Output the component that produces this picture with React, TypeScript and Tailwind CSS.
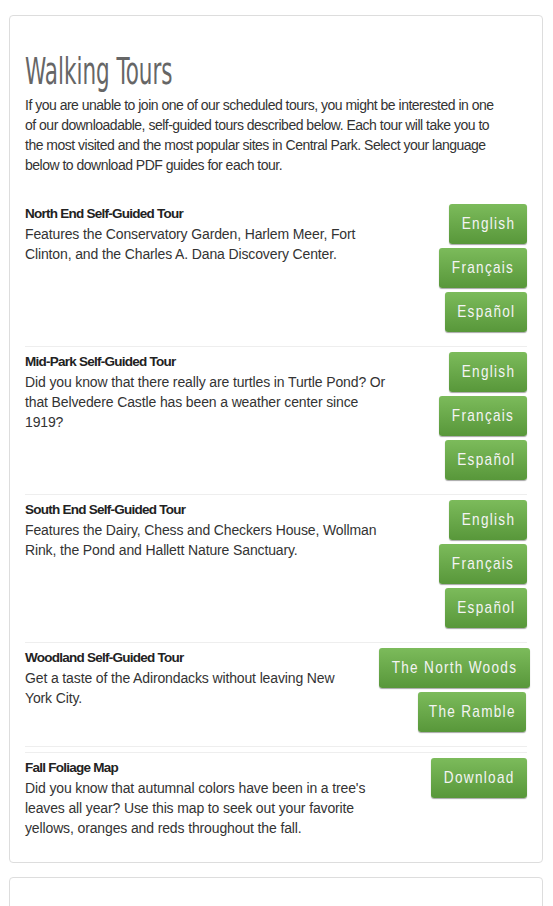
import React from "react";

const bodyFont = { fontFamily: '"Liberation Sans", Arial, sans-serif' };
const condFont = { fontFamily: '"DejaVu Sans Condensed", "DejaVu Sans", sans-serif' };

type Btn = { label: string; w: string; extra?: string };
type Row = { title: string; lines: string[]; buttons: Btn[] };

const langs: Btn[] = [
  { label: "English", w: "w-[78px]" },
  { label: "Français", w: "w-[88px]" },
  { label: "Español", w: "w-[82px]" },
];

const rows: Row[] = [
  {
    title: "North End Self-Guided Tour",
    lines: ["Features the Conservatory Garden, Harlem Meer, Fort", "Clinton, and the Charles A. Dana Discovery Center."],
    buttons: langs,
  },
  {
    title: "Mid-Park Self-Guided Tour",
    lines: [
      "Did you know that there really are turtles in Turtle Pond? Or",
      "that Belvedere Castle has been a weather center since",
      "1919?",
    ],
    buttons: langs,
  },
  {
    title: "South End Self-Guided Tour",
    lines: ["Features the Dairy, Chess and Checkers House, Wollman", "Rink, the Pond and Hallett Nature Sanctuary."],
    buttons: langs,
  },
  {
    title: "Woodland Self-Guided Tour",
    lines: ["Get a taste of the Adirondacks without leaving New", "York City."],
    buttons: [
      { label: "The North Woods", w: "w-[151px]", extra: "mr-[-3px]" },
      { label: "The Ramble", w: "w-[108px]", extra: "mr-[1px]" },
    ],
  },
];

function GreenButton({ b }: { b: Btn }) {
  return (
    <div
      className={`${b.w} ${b.extra ?? ""} h-[40px] rounded-[3px] bg-gradient-to-b from-[#7cbb5b] to-[#58973a] shadow-[0_1px_1px_rgba(0,0,0,0.35)] flex items-center justify-center text-[#f4f4f4]`}
    >
      <span
        className="inline-block whitespace-nowrap text-[17px] tracking-[1.6px] scale-x-[0.8] origin-center"
        style={bodyFont}
      >
        {b.label}
      </span>
    </div>
  );
}

function TextBlock({ title, lines }: { title: string; lines: string[] }) {
  return (
    <div className="w-[370px] text-[14px] leading-[20px] tracking-[-0.13px] text-[#333] whitespace-nowrap" style={bodyFont}>
      <div className="font-bold text-[#222] text-[13.5px] tracking-[-0.75px]">{title}</div>
      {lines.map((l) => (
        <div key={l}>{l}</div>
      ))}
    </div>
  );
}

function TourRow({ r }: { r: Row }) {
  return (
    <div className="flex justify-between border-b border-[#eeeeee] pb-[14px] mb-[5px]">
      <TextBlock title={r.title} lines={r.lines} />
      <div className="flex flex-col items-end gap-[4px]">
        {r.buttons.map((b) => (
          <GreenButton key={b.label} b={b} />
        ))}
      </div>
    </div>
  );
}

const intro = [
  "If you are unable to join one of our scheduled tours, you might be interested in one",
  "of our downloadable, self-guided tours described below. Each tour will take you to",
  "the most visited and the most popular sites in Central Park. Select your language",
  "below to download PDF guides for each tour.",
];

export default function App() {
  return (
    <div className="bg-white w-[553px] min-h-[906px] pt-[15px] overflow-hidden" style={bodyFont}>
      <div className="ml-[9px] w-[534px] border border-[#dddddd] rounded-[4px] px-[15px] pt-[34px] pb-[24px]">
        <h1
          className="text-[38px] leading-[42px] text-[#666] inline-block origin-left scale-x-[0.63] whitespace-nowrap"
          style={condFont}
        >
          Walking Tours
        </h1>
        <p className="mt-[3px] text-[14px] leading-[20px] tracking-[-0.5px] text-[#333] whitespace-nowrap">
          {intro.map((l) => (
            <span key={l} className="block">
              {l}
            </span>
          ))}
        </p>
        <div className="mt-[29px]">
          {rows.map((r) => (
            <TourRow key={r.title} r={r} />
          ))}
          <div className="border-t border-[#eeeeee] mb-[5px]" />
          <div className="flex justify-between">
            <TextBlock
              title="Fall Foliage Map"
              lines={[
                "Did you know that autumnal colors have been in a tree's",
                "leaves all year? Use this map to seek out your favorite",
                "yellows, oranges and reds throughout the fall.",
              ]}
            />
            <div className="flex flex-col items-end">
              <GreenButton b={{ label: "Download", w: "w-[96px]" }} />
            </div>
          </div>
        </div>
      </div>
      <div className="ml-[9px] mt-[14px] w-[534px] h-[100px] border border-[#dddddd] rounded-[4px]" />
    </div>
  );
}
